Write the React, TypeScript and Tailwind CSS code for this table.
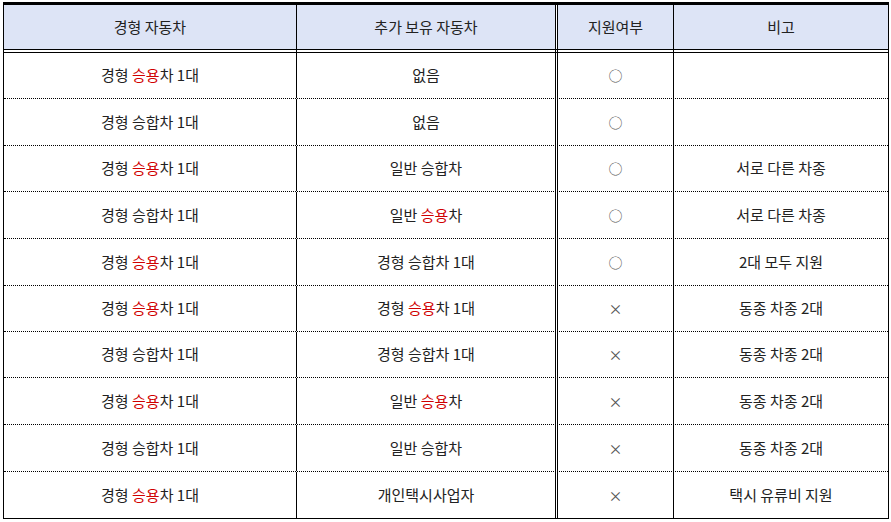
const FONT = { fontFamily: '"Noto Sans CJK KR", "Noto Sans", sans-serif' }

interface RowData {
  car: string
  extra: string
  ok: boolean
  note: string
}

const rows: RowData[] = [
  { car: "승용", extra: "없음", ok: true, note: "" },
  { car: "승합", extra: "없음", ok: true, note: "" },
  { car: "승용", extra: "일반 승합차", ok: true, note: "서로 다른 차종" },
  { car: "승합", extra: "일반 승용차", ok: true, note: "서로 다른 차종" },
  { car: "승용", extra: "경형 승합차 1대", ok: true, note: "2대 모두 지원" },
  { car: "승용", extra: "경형 승용차 1대", ok: false, note: "동종 차종 2대" },
  { car: "승합", extra: "경형 승합차 1대", ok: false, note: "동종 차종 2대" },
  { car: "승용", extra: "일반 승용차", ok: false, note: "동종 차종 2대" },
  { car: "승합", extra: "일반 승합차", ok: false, note: "동종 차종 2대" },
  { car: "승용", extra: "개인택시사업자", ok: false, note: "택시 유류비 지원" },
]

const heights = ["h-[46px]", "h-[47px]", "h-[46px]", "h-[47px]", "h-[47px]", "h-[46px]", "h-[46px]", "h-[47px]", "h-[47px]", "h-[46px]"]

// highlights 승용 in red, leaves 승합 plain
function Highlight({ text }: { text: string }) {
  const idx = text.indexOf("승용")
  if (idx < 0) return <span className="whitespace-pre">{text}</span>
  return (
    <span className="whitespace-pre">
      {text.slice(0, idx)}
      <span className="text-[#d00000]">승용</span>
      {text.slice(idx + 2)}
    </span>
  )
}

function Cols({
  a,
  b,
  c,
  d,
  className,
}: {
  a: React.ReactNode
  b: React.ReactNode
  c: React.ReactNode
  d: React.ReactNode
  className: string
}) {
  return (
    <div className={`flex ${className}`}>
      <div className="w-[293px] flex items-center justify-center border-r border-black">{a}</div>
      <div className="w-[259px] flex items-center justify-center border-r border-black">{b}</div>
      <div className="w-[1px] bg-white" />
      <div className="w-[117px] flex items-center justify-center border-l border-r border-black">{c}</div>
      <div className="flex-1 flex items-center justify-center">{d}</div>
    </div>
  )
}

export default function App() {
  return (
    <div className="bg-white w-[891px] h-[522px] pt-[2px] pl-[3px] text-[15px] text-[#222]" style={FONT}>
      <div className="w-[886px] border-t-[3px] border-l border-r border-b border-black">
        <Cols
          className="h-[45px] bg-[#dde4f6] border-b border-black"
          a="경형 자동차"
          b="추가 보유 자동차"
          c="지원여부"
          d="비고"
        />
        <Cols className="h-[3px] border-b border-black" a="" b="" c="" d="" />
        {rows.map((r, i) => (
          <Cols
            key={i}
            className={`${heights[i]} ${i < rows.length - 1 ? "border-b border-dotted border-black" : ""}`}
            a={<Highlight text={`경형 ${r.car}차 1대`} />}
            b={<Highlight text={r.extra} />}
            c={<span className="text-[#555] text-[14px]">{r.ok ? "○" : "×"}</span>}
            d={r.note}
          />
        ))}
      </div>
    </div>
  )
}
